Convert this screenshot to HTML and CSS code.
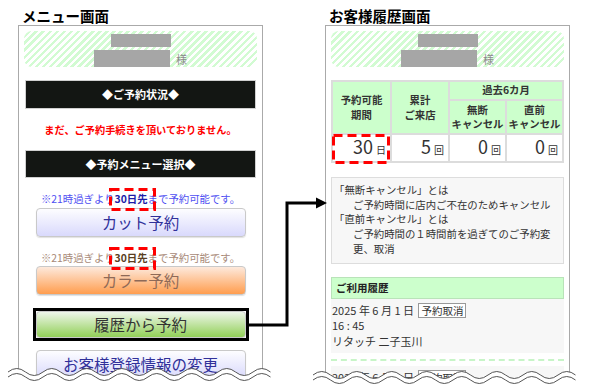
FILE: index.html
```html
<!DOCTYPE html>
<html lang="ja">
<head>
  <meta charset="UTF-8">
  <title>メニュー画面 / お客様履歴画面</title>
  <link rel="stylesheet" href="styles.css">
</head>
<body>
  <div class="screens">
    <!-- メニュー画面 -->
    <section class="screen">
      <h2 class="screen-title">メニュー画面</h2>
      <div class="panel">
        <div class="guest">
          <span class="redact redact-id"></span>
          <div class="guest-name"><span class="redact redact-name"></span><span class="sama">様</span></div>
        </div>

        <div class="bar">◆ご予約状況◆</div>
        <p class="status">まだ、ご予約手続きを頂いておりません。</p>
        <div class="bar bar-menu">◆予約メニュー選択◆</div>

        <p class="notice notice-cut">※21時過ぎより<span class="mark"><b>30日先</b><svg class="dash-box" viewBox="0 0 47 23"><rect x="1.5" y="1.5" width="44" height="20"/></svg></span>まで予約可能です。</p>
        <div class="btn btn-cut">カット予約</div>

        <p class="notice notice-color">※21時過ぎより<span class="mark"><b>30日先</b><svg class="dash-box" viewBox="0 0 47 23"><rect x="1.5" y="1.5" width="44" height="20"/></svg></span>まで予約可能です。</p>
        <div class="btn btn-color">カラー予約</div>

        <div class="hist-frame">
          <div class="btn btn-history">履歴から予約</div>
        </div>

        <div class="btn btn-profile">お客様登録情報の変更</div>
      </div>
    </section>

    <!-- お客様履歴画面 -->
    <section class="screen">
      <h2 class="screen-title">お客様履歴画面</h2>
      <div class="panel">
        <div class="guest">
          <span class="redact redact-id"></span>
          <div class="guest-name"><span class="redact redact-name"></span><span class="sama">様</span></div>
        </div>

        <table class="stats">
          <tr class="row-head1">
            <th rowspan="2" class="col-a">予約可能<br>期間</th>
            <th rowspan="2" class="col-b">累計<br>ご来店</th>
            <th colspan="2">過去6カ月</th>
          </tr>
          <tr class="row-head2">
            <th class="col-c">無断<br>キャンセル</th>
            <th>直前<br>キャンセル</th>
          </tr>
          <tr class="row-data">
            <td class="cell-term">30<small>日</small><svg class="dash-box term-box" viewBox="0 0 58 30"><rect x="1.5" y="1.5" width="55" height="27"/></svg></td>
            <td>5<small>回</small></td>
            <td>0<small>回</small></td>
            <td>0<small>回</small></td>
          </tr>
        </table>

        <div class="note">
          <div>「無断キャンセル」とは</div>
          <div class="note-def">ご予約時間に店内ご不在のためキャンセル</div>
          <div>「直前キャンセル」とは</div>
          <div class="note-def">ご予約時間の１時間前を過ぎてのご予約変更、取消</div>
        </div>

        <div class="history-head">ご利用履歴</div>
        <div class="entry">
          <div>2025 年 6 月 1 日 <span class="cancel">予約取消</span></div>
          <div>16 : 45</div>
          <div>リタッチ 二子玉川</div>
        </div>
        <div class="entry-sep"></div>
        <div class="entry">
          <div>2025 年 6 月 1 日 <span class="cancel">予約取消</span></div>
        </div>
      </div>
    </section>

    <!-- 矢印 -->
    <svg class="connector" viewBox="0 0 590 389">
      <polyline points="248,325 287,325 287,203 318,203"/>
      <polygon points="316,197.5 327,203 316,208.5"/>
    </svg>

    <!-- 省略の波線 -->
    <svg class="cut-edge" viewBox="0 0 590 389">
      <path class="cover" d="M8,372 q8.75,-7 17.5,0 t17.5,0 t17.5,0 t17.5,0 t17.5,0 t17.5,0 t17.5,0 t17.5,0 t17.5,0 t17.5,0 t17.5,0 t17.5,0 t17.5,0 t17.5,0 t17.5,0 L270.5,389 L8,389 Z"/>
      <path class="cover" d="M313,375 q8.75,-7 17.5,0 t17.5,0 t17.5,0 t17.5,0 t17.5,0 t17.5,0 t17.5,0 t17.5,0 t17.5,0 t17.5,0 t17.5,0 t17.5,0 t17.5,0 t17.5,0 t17.5,0 L575.5,389 L313,389 Z"/>
      <path class="wave" d="M8,372 q8.75,-7 17.5,0 t17.5,0 t17.5,0 t17.5,0 t17.5,0 t17.5,0 t17.5,0 t17.5,0 t17.5,0 t17.5,0 t17.5,0 t17.5,0 t17.5,0 t17.5,0 t17.5,0"/>
      <path class="wave" d="M8,377 q8.75,-7 17.5,0 t17.5,0 t17.5,0 t17.5,0 t17.5,0 t17.5,0 t17.5,0 t17.5,0 t17.5,0 t17.5,0 t17.5,0 t17.5,0 t17.5,0 t17.5,0 t17.5,0"/>
      <path class="wave" d="M313,375 q8.75,-7 17.5,0 t17.5,0 t17.5,0 t17.5,0 t17.5,0 t17.5,0 t17.5,0 t17.5,0 t17.5,0 t17.5,0 t17.5,0 t17.5,0 t17.5,0 t17.5,0 t17.5,0"/>
      <path class="wave" d="M313,380 q8.75,-7 17.5,0 t17.5,0 t17.5,0 t17.5,0 t17.5,0 t17.5,0 t17.5,0 t17.5,0 t17.5,0 t17.5,0 t17.5,0 t17.5,0 t17.5,0 t17.5,0 t17.5,0"/>
    </svg>
  </div>
</body>
</html>
```

FILE: styles.css
```css
:root {
  --frame: #aaa;
  --light-green: #ccffcc;
  --redact: #a6a6a6;
  --bar: #131613;
  --panel-gray: #f7f7f7;
}

* {
  box-sizing: border-box;
}

body {
  margin: 0;
  background: #fff;
  color: #333;
  font-family: "Noto Sans CJK JP", sans-serif;
}

.screens {
  position: relative;
  display: flex;
  gap: 62px;
  height: 389px;
  padding: 6px 0 0 18px;
  overflow: hidden;
}

.screen {
  display: flex;
  flex-direction: column;
  width: 245px;
}

.screen-title {
  margin: 0 0 0 4px;
  font-size: 14.5px;
  line-height: 19px;
  font-weight: 700;
  color: #000;
}

.panel {
  flex: 1;
  border: 1px solid var(--frame);
  border-bottom: none;
  padding: 5px;
}

/* お客様名 */
.guest {
  height: 36px;
  padding-top: 3px;
  border-radius: 8px;
  background: repeating-linear-gradient(-45deg, #d2fbd2 0 2.5px, #fff 2.5px 5px);
}

.redact {
  display: block;
  background: var(--redact);
}

.redact-id {
  width: 60px;
  height: 13px;
  margin: 0 auto;
}

.guest-name {
  display: flex;
  justify-content: center;
  gap: 6px;
  margin-top: 3px;
}

.redact-name {
  width: 76px;
  height: 17px;
}

.sama {
  font-size: 11px;
  line-height: 19px;
  color: #8a8a8a;
}

/* メニュー */
.bar {
  height: 29px;
  margin: 13px 1px 0;
  border: 1px solid #d0d0d0;
  background: var(--bar);
  color: #fff;
  font-size: 11px;
  font-weight: 700;
  line-height: 27px;
  text-align: center;
}

.bar-menu {
  height: 28px;
  margin-top: 0;
  line-height: 26px;
}

.status {
  margin: 0;
  height: 41px;
  line-height: 41px;
  font-size: 10.2px;
  font-weight: 700;
  color: #f00;
  text-align: center;
}

.notice {
  margin: 13px 0 0;
  font-size: 10.4px;
  line-height: 16px;
  text-align: center;
}

.notice-cut {
  color: #5050f2;
}

.notice-cut b {
  color: #1c1ca8;
}

.notice-color {
  color: #a88a78;
}

.notice-color b {
  color: #5a3e22;
}

.mark {
  position: relative;
}

.dash-box {
  position: absolute;
  left: -6px;
  top: -3px;
  width: 47px;
  height: 23px;
  overflow: visible;
}

.dash-box rect {
  fill: none;
  stroke: #f00;
  stroke-width: 3;
  stroke-dasharray: 9 5;
}

.btn {
  width: 210px;
  height: 29px;
  margin: 1px auto 0;
  border: 1px solid #c9c9c9;
  border-radius: 4px;
  font-size: 15.5px;
  line-height: 27px;
  text-align: center;
  box-shadow: 0 1px 1px rgba(0, 0, 0, 0.12);
}

.btn-cut,
.btn-profile {
  background: linear-gradient(#fdfdff, #d9d9fc);
  color: #30309a;
}

.btn-color {
  margin-top: 0;
  background: linear-gradient(#fde9dc, #ff9d4e);
  color: #8e6a58;
}

.hist-frame {
  width: 216px;
  margin: 13px auto 0;
  border: 3px solid #000;
}

.btn-history {
  height: 27px;
  margin: 0;
  line-height: 25px;
  background: linear-gradient(#eef6ea, #92d058);
  color: #333;
}

.btn-profile {
  margin-top: 9px;
}

/* 履歴画面 */
.stats {
  width: 100%;
  margin-top: 13px;
  border-collapse: collapse;
  table-layout: fixed;
}

.stats th,
.stats td {
  border: 2px solid #dcdcdc;
  padding: 0;
}

.stats th {
  background: var(--light-green);
  font-size: 10.4px;
  font-weight: 700;
  line-height: 14.5px;
  text-align: center;
}

.row-head1 {
  height: 19px;
}

.row-head2 {
  height: 34px;
}

.row-data {
  height: 26px;
}

.col-a,
.col-c {
  width: 59px;
}

.col-b {
  width: 58px;
}

.stats td {
  position: relative;
  padding-right: 4px;
  background: #fff;
  font-size: 18px;
  line-height: 22px;
  text-align: right;
}

.stats td small {
  margin-left: 3px;
  font-size: 10px;
}

.term-box {
  left: -1px;
  top: -1px;
  width: 58px;
  height: 30px;
}

.note {
  margin-top: 14px;
  padding: 5px 2px 6px;
  border: 1px solid #ddd;
  background: var(--panel-gray);
  font-size: 10.4px;
  line-height: 14.7px;
}

.note-def {
  padding-left: 19px;
}

.history-head {
  margin-top: 13px;
  height: 22px;
  padding-left: 4px;
  border: 1px solid #b9e3b9;
  background: var(--light-green);
  font-size: 10.5px;
  font-weight: 700;
  line-height: 20px;
  color: #222;
}

.entry {
  padding: 4px 1px;
  background: var(--panel-gray);
  font-size: 11px;
  line-height: 15.5px;
}

.cancel {
  display: inline-block;
  margin-left: 2px;
  padding: 0 2px;
  border: 1px solid #999;
  background: #fff;
  font-size: 10.5px;
  line-height: 13px;
}

.entry-sep {
  margin: 6px 0 5px;
  border-top: 2px dashed #c8f5c8;
}

/* overlays */
.connector,
.cut-edge {
  position: absolute;
  left: 0;
  top: 0;
  width: 590px;
  height: 389px;
  pointer-events: none;
}

.connector polyline {
  fill: none;
  stroke: #000;
  stroke-width: 3;
}

.connector polygon {
  fill: #000;
}

.cut-edge .cover {
  fill: #fff;
}

.cut-edge .wave {
  fill: none;
  stroke: #555;
  stroke-width: 1;
}
```
